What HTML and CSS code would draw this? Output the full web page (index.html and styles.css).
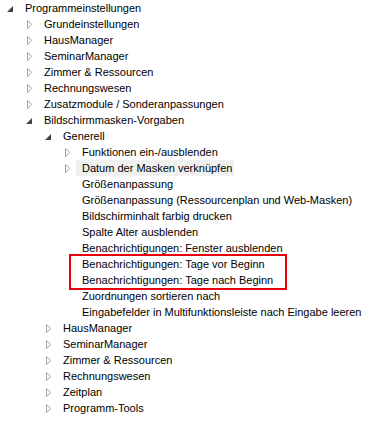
FILE: index.html
```html
<!DOCTYPE html>
<html lang="de">
<head>
<meta charset="utf-8">
<title>Programmeinstellungen</title>
<link rel="stylesheet" href="styles.css">
</head>
<body>
<div class="tree">
  <ul class="level">
    <li>
      <div class="row"><span class="tg"><svg class="exp" width="6" height="6" viewBox="0 0 6 6"><polygon points="0,6 6,6 6,0"/></svg></span><span class="lbl">Programmeinstellungen</span></div>
      <ul class="level sub">
        <li><div class="row"><span class="tg"><svg class="col" width="6" height="9" viewBox="0 0 6 9"><polygon points="0.5,0.5 0.5,8.5 4.8,4.5"/></svg></span><span class="lbl">Grundeinstellungen</span></div></li>
        <li><div class="row"><span class="tg"><svg class="col" width="6" height="9" viewBox="0 0 6 9"><polygon points="0.5,0.5 0.5,8.5 4.8,4.5"/></svg></span><span class="lbl">HausManager</span></div></li>
        <li><div class="row"><span class="tg"><svg class="col" width="6" height="9" viewBox="0 0 6 9"><polygon points="0.5,0.5 0.5,8.5 4.8,4.5"/></svg></span><span class="lbl">SeminarManager</span></div></li>
        <li><div class="row"><span class="tg"><svg class="col" width="6" height="9" viewBox="0 0 6 9"><polygon points="0.5,0.5 0.5,8.5 4.8,4.5"/></svg></span><span class="lbl">Zimmer &amp; Ressourcen</span></div></li>
        <li><div class="row"><span class="tg"><svg class="col" width="6" height="9" viewBox="0 0 6 9"><polygon points="0.5,0.5 0.5,8.5 4.8,4.5"/></svg></span><span class="lbl">Rechnungswesen</span></div></li>
        <li><div class="row"><span class="tg"><svg class="col" width="6" height="9" viewBox="0 0 6 9"><polygon points="0.5,0.5 0.5,8.5 4.8,4.5"/></svg></span><span class="lbl">Zusatzmodule / Sonderanpassungen</span></div></li>
        <li>
          <div class="row"><span class="tg"><svg class="exp" width="6" height="6" viewBox="0 0 6 6"><polygon points="0,6 6,6 6,0"/></svg></span><span class="lbl">Bildschirmmasken-Vorgaben</span></div>
          <ul class="level sub">
            <li>
              <div class="row"><span class="tg"><svg class="exp" width="6" height="6" viewBox="0 0 6 6"><polygon points="0,6 6,6 6,0"/></svg></span><span class="lbl">Generell</span></div>
              <ul class="level sub">
                <li><div class="row"><span class="tg"><svg class="col" width="6" height="9" viewBox="0 0 6 9"><polygon points="0.5,0.5 0.5,8.5 4.8,4.5"/></svg></span><span class="lbl">Funktionen ein-/ausblenden</span></div></li>
                <li><div class="row"><span class="tg"><svg class="col" width="6" height="9" viewBox="0 0 6 9"><polygon points="0.5,0.5 0.5,8.5 4.8,4.5"/></svg></span><span class="lbl hover">Datum der Masken verknüpfen</span></div></li>
                <li><div class="row"><span class="tg"></span><span class="lbl">Größenanpassung</span></div></li>
                <li><div class="row"><span class="tg"></span><span class="lbl">Größenanpassung (Ressourcenplan und Web-Masken)</span></div></li>
                <li><div class="row"><span class="tg"></span><span class="lbl">Bildschirminhalt farbig drucken</span></div></li>
                <li><div class="row"><span class="tg"></span><span class="lbl">Spalte Alter ausblenden</span></div></li>
                <li><div class="row"><span class="tg"></span><span class="lbl">Benachrichtigungen: Fenster ausblenden</span></div></li>
                <li><div class="row"><span class="tg"></span><span class="lbl">Benachrichtigungen: Tage vor Beginn</span></div></li>
                <li><div class="row"><span class="tg"></span><span class="lbl">Benachrichtigungen: Tage nach Beginn</span></div></li>
                <li><div class="row"><span class="tg"></span><span class="lbl">Zuordnungen sortieren nach</span></div></li>
                <li><div class="row"><span class="tg"></span><span class="lbl">Eingabefelder in Multifunktionsleiste nach Eingabe leeren</span></div></li>
              </ul>
            </li>
            <li><div class="row"><span class="tg"><svg class="col" width="6" height="9" viewBox="0 0 6 9"><polygon points="0.5,0.5 0.5,8.5 4.8,4.5"/></svg></span><span class="lbl">HausManager</span></div></li>
            <li><div class="row"><span class="tg"><svg class="col" width="6" height="9" viewBox="0 0 6 9"><polygon points="0.5,0.5 0.5,8.5 4.8,4.5"/></svg></span><span class="lbl">SeminarManager</span></div></li>
            <li><div class="row"><span class="tg"><svg class="col" width="6" height="9" viewBox="0 0 6 9"><polygon points="0.5,0.5 0.5,8.5 4.8,4.5"/></svg></span><span class="lbl">Zimmer &amp; Ressourcen</span></div></li>
            <li><div class="row"><span class="tg"><svg class="col" width="6" height="9" viewBox="0 0 6 9"><polygon points="0.5,0.5 0.5,8.5 4.8,4.5"/></svg></span><span class="lbl">Rechnungswesen</span></div></li>
            <li><div class="row"><span class="tg"><svg class="col" width="6" height="9" viewBox="0 0 6 9"><polygon points="0.5,0.5 0.5,8.5 4.8,4.5"/></svg></span><span class="lbl">Zeitplan</span></div></li>
            <li><div class="row"><span class="tg"><svg class="col" width="6" height="9" viewBox="0 0 6 9"><polygon points="0.5,0.5 0.5,8.5 4.8,4.5"/></svg></span><span class="lbl">Programm-Tools</span></div></li>
          </ul>
        </li>
      </ul>
    </li>
  </ul>
  <div class="mark"></div>
</div>
</body>
</html>
```

FILE: styles.css
```css
html, body {
  margin: 0;
  padding: 0;
  background: #ffffff;
}

.tree {
  position: relative;
  width: 369px;
  height: 422px;
  font-family: "Liberation Sans", Arial, sans-serif;
  font-size: 11px;
  color: #000000;
}

.level {
  list-style: none;
  margin: 0;
  padding: 0;
}

.sub {
  padding-left: 19px;
}

.row {
  display: flex;
  align-items: center;
  height: 16px;
  white-space: nowrap;
}

.tg {
  display: flex;
  align-items: center;
  width: 19px;
  height: 16px;
  flex: none;
}

.exp {
  margin-left: 7px;
  margin-top: 1px;
  fill: #444444;
}

.col {
  margin-left: 8px;
  margin-top: 1px;
  fill: none;
  stroke: #a6a6a6;
  stroke-width: 1;
}

.lbl {
  display: flex;
  align-items: center;
  height: 16px;
  padding: 0 2px 0 6px;
}

.hover {
  background: #f0f0f0;
}

.mark {
  position: absolute;
  left: 69px;
  top: 254px;
  width: 214px;
  height: 32px;
  border: 2px solid #e8000b;
}
```
